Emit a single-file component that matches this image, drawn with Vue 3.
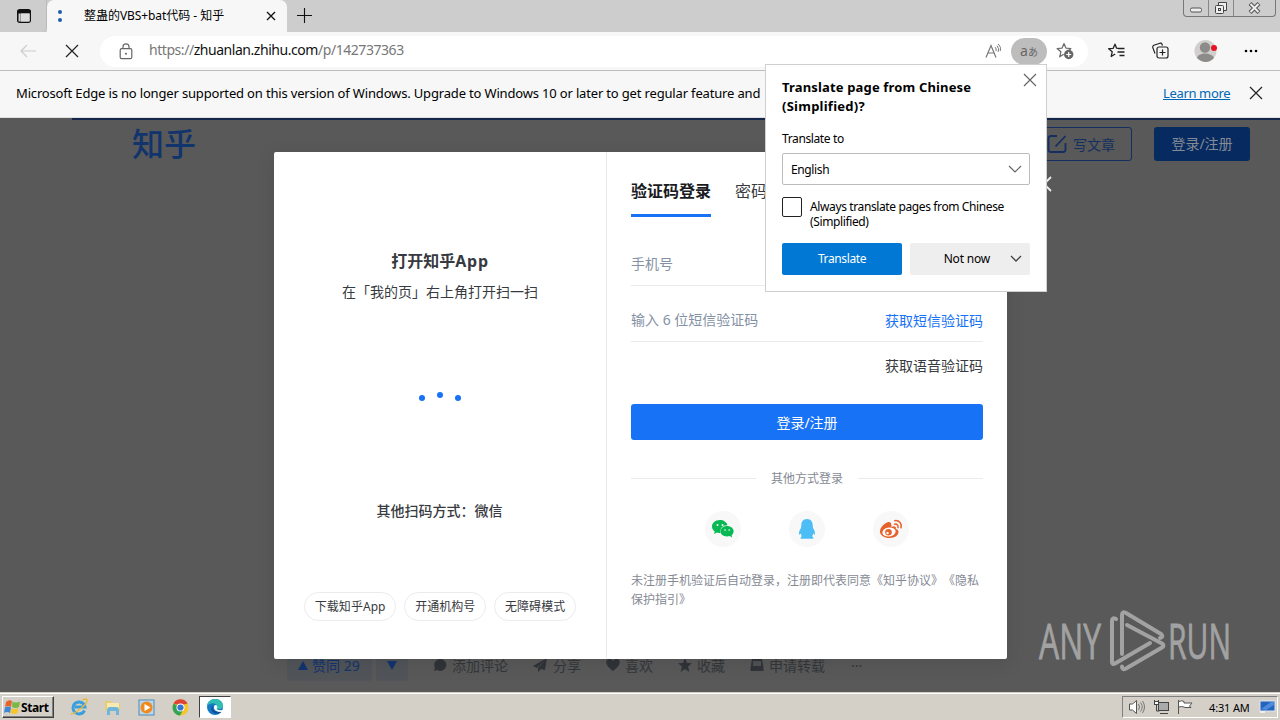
<script setup>
const tasks = ['下载知乎App', '开通机构号', '无障碍模式']
</script>

<template>
  <div class="screen">
    <div class="tabstrip">
      <div class="tabmenu">
        <svg width="16" height="16" viewBox="0 0 16 16"><rect x="1.700" y="1.700" width="12.600" height="12.600" rx="2" fill="none" stroke="#111" stroke-width="1.400" /><path d="M1.500 2h13v3.500h-13z M1.500 5h3v9h-3z" fill="#111" /><rect x="5" y="5.500" width="8.600" height="8" fill="#ddd" /><rect x="2.500" y="5.500" width="2" height="8" fill="#ccc" /></svg>
      </div>
      <div class="tab">
        <span class="load"><i></i><i></i></span>
        <span class="tabtitle">整蛊的<span class="lat">VBS+bat</span>代码 - 知乎</span>
        <svg class="tabx" width="10" height="10" viewBox="0 0 10 10"><path d="M1 1l8 8M9 1l-8 8" stroke="#111" stroke-width="1.300" /></svg>
      </div>
      <svg class="plus" width="16" height="16" viewBox="0 0 16 16"><path d="M7.500 0v15M0 7.500h15" stroke="#111" stroke-width="1.100" /></svg>
      <div class="winbtns">
        <span class="wb w1"><svg width="14" height="6" viewBox="0 0 14 6"><rect x="1.500" y="1" width="11" height="4" rx="1.500" fill="#eee" stroke="#555" /></svg></span>
        <span class="wb w2"><svg width="14" height="14" viewBox="0 0 14 14"><path d="M4.500 4V1.500h8v8H10" fill="#eee" stroke="#444" /><rect x="1.500" y="4.500" width="8" height="8" rx="1" fill="#eee" stroke="#444" /><rect x="4.500" y="7.500" width="2" height="2" fill="none" stroke="#444" /></svg></span>
        <span class="wb w3"><svg width="13" height="12" viewBox="0 0 13 12"><path d="M2 1.500l9 9M11 1.500l-9 9" stroke="#555" stroke-width="4" /><path d="M2.500 2l8 8M10.500 2l-8 8" stroke="#eee" stroke-width="2" /></svg></span>
      </div>
    </div>

    <div class="toolbar">
      <svg class="back" width="17" height="14" viewBox="0 0 17 14"><path d="M7 1L1 7l6 6M1 7h15" fill="none" stroke="#ccc" stroke-width="1.200" /></svg>
      <svg class="stop" width="14" height="14" viewBox="0 0 14 14"><path d="M1 1l12 12M13 1L1 13" stroke="#222" stroke-width="1.200" /></svg>
      <div class="address">
        <svg class="lock" width="14" height="17" viewBox="0 0 14 17"><rect x="1.200" y="5.700" width="11.600" height="10" rx="1.500" fill="none" stroke="#666" stroke-width="1.200" /><path d="M4 5.500V3.800a3 3 0 0 1 6 0v1.700" fill="none" stroke="#666" stroke-width="1.200" /><circle cx="7" cy="10.800" r="1" fill="#666" /></svg>
        <span class="url">https://<b>zhuanlan.zhihu.com</b>/p/142737363</span>
        <svg class="read" width="17" height="16" viewBox="0 0 17 16"><path d="M1 14.500L6 2.500l5 12M2.900 10h6.200" fill="none" stroke="#777" stroke-width="1.200" /><path d="M10.200 4.200q1.600 1.700.8 4M12 2.800q2.500 2.600 1.200 6M13.300 1q3.300 3.300 2 7" fill="none" stroke="#777" /></svg>
        <span class="trans"><i>a</i><em>あ</em></span>
        <svg class="fav" width="18" height="18" viewBox="0 0 18 18"><path d="M8 1.500l1.900 4.600 5 .4-3.700 3.200M8 1.500L6.100 6.100l-5 .4 3.800 3.300-1.200 5 4-2.500" fill="none" stroke="#666" stroke-width="1.200" stroke-linejoin="round" /><circle cx="12.700" cy="12.500" r="4.700" fill="#666" /><path d="M12.700 10v5M10.200 12.500h5" stroke="#fff" stroke-width="1.200" /></svg>
      </div>
      <svg class="a a1" width="18" height="16" viewBox="0 0 18 16"><path d="M10 5.400L8.600 5.200 7 1.200 5.200 5.300l-4.500.4 3.500 3.100-1 4.700L7.200 11M10 5.500h6.500M9.500 9h7M11.500 12.500h5" fill="none" stroke="#222" stroke-width="1.300" stroke-linejoin="round" /></svg>
      <svg class="a a2" width="18" height="18" viewBox="0 0 18 18"><path d="M4 11.500L1.800 5.600Q1.300 4 2.800 3.300L9 1.200q1.500-.4 2 1l.4 1.500" fill="none" stroke="#222" stroke-width="1.200" /><rect x="6" y="5" width="11" height="11" rx="2" fill="#f7f7f7" stroke="#222" stroke-width="1.200" /><path d="M11.500 7.500v6M8.500 10.500h6" stroke="#222" stroke-width="1.200" /></svg>
      <svg class="a a3" width="24" height="24" viewBox="0 0 24 24"><circle cx="11.500" cy="12" r="11" fill="#d1cfcd" /><circle cx="11" cy="8.500" r="5.200" fill="#8d8b89" /><path d="M3 19c1-6 15-6 17 0q-8 8-17 0z" fill="#8d8b89" /><circle cx="20" cy="9" r="3" fill="#e81123" /></svg>
      <svg class="a a4" width="14" height="4" viewBox="0 0 14 4"><circle cx="2" cy="2" r="1.300" /><circle cx="7" cy="2" r="1.300" /><circle cx="12" cy="2" r="1.300" /></svg>
    </div>

    <div class="infobar">
      <span class="infotext">Microsoft Edge is no longer supported on this version of Windows. Upgrade to Windows 10 or later to get regular feature and</span>
      <span class="learn">Learn more</span>
      <svg class="infox" width="14" height="14" viewBox="0 0 14 14"><path d="M1 1l12 12M13 1L1 13" stroke="#222" stroke-width="1.200" /></svg>
    </div>

    <div class="page">
      <div class="progress"></div>
      <div class="head">
        <span class="logo">知乎</span>
        <span class="write"><svg width="20" height="20" viewBox="0 0 20 20"><path d="M10 2H4Q1.500 2 1.500 4.500v11Q1.500 18 4 18h12q2.500 0 2.500-2.500V9M8.500 12.500L18.500 2" fill="none" stroke="#142e60" stroke-width="1.800" /></svg>写文章</span>
        <span class="login">登录/注册</span>
      </div>
      <svg class="closemodal" width="8" height="16" viewBox="0 0 8 16"><path d="M7 1L0 8l7 7" fill="none" stroke="#eee" stroke-width="1.800" /></svg>
      <div class="actions">
        <span class="vote"><svg width="10" height="9"><path d="M5 0l5 9H0z" fill="#12346f" /></svg>赞同 29</span>
        <span class="down"><svg width="10" height="9"><path d="M0 0h10L5 9z" fill="#12346f" /></svg></span>
        <span class="act c1"><svg width="14" height="14"><path d="M7 1a6 6 0 1 1-3 11L1 13l1-3A6 6 0 0 1 7 1z" /></svg>添加评论</span>
        <span class="act c2"><svg width="15" height="14"><path d="M14 0L0 8l4 2zM14 0L5 10v4l3-3 4 1z" /></svg>分享</span>
        <span class="act c3"><svg width="14" height="14"><path d="M7 13C-6 4 3-3 7 3c4-6 13 1 0 10z" /></svg>喜欢</span>
        <span class="act c4"><svg width="14" height="14"><path d="M7 0l2 5 5 .3-4 3.300L11.500 14 7 11l-4.500 3L4 8.600 0 5.300 5 5z" /></svg>收藏</span>
        <span class="act c5"><svg width="14" height="14"><path d="M2 1h10l1.500 9v3H.500v-3z" /><path d="M3 3h8v5H3z" fill="#505255" /></svg>申请转载</span>
        <span class="act c6">···</span>
      </div>

      <svg class="anyrun" width="210" height="64" viewBox="0 0 210 64">
        <g fill="none" stroke="#a2a2a2" stroke-width="4" stroke-linecap="round" stroke-linejoin="round">
          <path d="M77 9q-4-2-4 2v41q0 3 3 1.500l35-20.500" />
          <path d="M83 44V5q0-4 4-2l35 21q3 3-1 4" />
          <path d="M88 15l35 18.500q3 2 0 4L87 58.500q-4 2-4-2" />
        </g>
        <text x="0" y="48.500" class="arword" textLength="62" lengthAdjust="spacingAndGlyphs">ANY</text>
        <text x="129" y="48.500" class="arword" textLength="63" lengthAdjust="spacingAndGlyphs">RUN</text>
      </svg>

      <div class="modal">
        <div class="left">
          <div class="ltitle">打开知乎<span>App</span></div>
          <div class="lsub">在「我的页」右上角打开扫一扫</div>
          <div class="dots"><i></i><i class="up"></i><i></i></div>
          <div class="lother">其他扫码方式：微信</div>
          <div class="pills"><span v-for="t in tasks" :key="t">{{ t }}</span></div>
        </div>
        <div class="right">
          <div class="tabs"><span class="on">验证码登录</span><span>密码登录</span></div>
          <div class="field f1">手机号</div>
          <div class="field f2"><span>输入 6 位短信验证码</span><b>获取短信验证码</b></div>
          <div class="voice">获取语音验证码</div>
          <div class="submit">登录/注册</div>
          <div class="sep"><i></i><span>其他方式登录</span><i></i></div>
          <div class="social">
            <span><svg width="24" height="20" viewBox="0 0 24 20"><path d="M9 1C4 1 1 4 1 7.500c0 2 1 3.800 2.800 5L3 15l3-1.500q1.500.500 3.500.500C8.500 9 12 6 16.500 6.200 15.700 3 12.500 1 9 1z" fill="#07b853" /><path d="M16 7c-4 0-6.500 2.500-6.500 5.300S12 17.500 16 17.500q1.500 0 2.600-.4l2.600 1.300-.6-2c1.200-1 2-2.400 2-4.100C22.600 9.500 20 7 16 7z" fill="#07b853" /><g fill="#fff"><circle cx="6.500" cy="6" r="1" /><circle cx="11.500" cy="6" r="1" /><circle cx="14" cy="11" r=".8" /><circle cx="18.200" cy="11" r=".8" /></g></svg></span>
            <span><svg width="18" height="22" viewBox="0 0 18 22"><path d="M9 1C5 1 3.300 4 3.300 7L3 10c-1 1.300-2.300 4-2 6 .2 1.200 1 .7 1.800-.8.200 1.500.6 2.300 1.200 3-1.500.7-1.700 1.800-.9 2.500h11.800c.8-.7.6-1.800-.9-2.500.6-.7 1-1.500 1.200-3 .8 1.500 1.600 2 1.800.8.300-2-1-4.700-2-6l-.3-3C14.700 4 13 1 9 1z" fill="#4dbdf5" /></svg></span>
            <span><svg width="24" height="20" viewBox="0 0 24 20"><path d="M9.500 3C5 4 1 8.800 1 12.500 1 16.500 5.500 19 10.500 19c5.500 0 9-3 9-6 0-1.800-1.200-2.700-2.700-3 .7-2.500-1-3.500-4.500-2.200C13 4.500 11.500 2.700 9.500 3z" fill="#e6622b" /><ellipse cx="10" cy="13" rx="6.700" ry="4.500" fill="#fff" transform="rotate(-8 10 13)" /><circle cx="9.500" cy="13.300" r="3.300" fill="#e6622b" /><circle cx="8.500" cy="14" r="1.200" fill="#fff" /><path d="M15.500 5.200q4-.7 3.500 3.500M15.800 1.700c4.500-.6 7.300 2.800 6.200 7" fill="none" stroke="#e6622b" stroke-width="1.500" stroke-linecap="round" /></svg></span>
          </div>
          <div class="terms">未注册手机验证后自动登录，注册即代表同意《知乎协议》《隐私保护指引》</div>
        </div>
      </div>
    </div>

    <div class="taskbar">
      <div class="start"><svg width="17" height="16" viewBox="0 0 17 16"><path d="M2 3q3-3 6-1L7 8Q4 6 1 8z" fill="#e8622c" /><path d="M8.500 2.500q3 2 7.500 0L15 8q-3 2-7 0z" fill="#78b843" /><path d="M1 8.500q3-2 6 0L6 14q-3-2-6 0z" fill="#3f87d6" /><path d="M7.500 9q3 2 7 0l-1 5q-3 2-7 0z" fill="#f6c62d" /></svg><span>Start</span></div>
      <svg class="q q1" width="18" height="18" viewBox="0 0 18 18"><path d="M14.500 12.500A6 6 0 1 1 15 9H5" fill="none" stroke="#3b9fdc" stroke-width="3" /><path d="M2 15C-2 20 18 7 17 2q-.5-2-5 0" fill="none" stroke="#e8b93c" stroke-width="1.300" /></svg>
      <svg class="q q2" width="18" height="17" viewBox="0 0 18 17"><path d="M1 2h6l1 2h8v8H1z" fill="#e9cd72" /><path d="M3 4h12v8H3z" fill="#f8eab3" /><path d="M3 16v-5q0-3 3-3h6q3 0 3 3v5h-3v-4H6v4z" fill="#70b5dc" /></svg>
      <svg class="q q3" width="17" height="17" viewBox="0 0 17 17"><rect x="1" y="1" width="15" height="15" fill="#b8d8ed" stroke="#5289b5" /><circle cx="8.500" cy="8.500" r="6" fill="#f08a1d" /><path d="M6.500 5l6 3.500-6 3.500z" fill="#fff" /></svg>
      <svg class="q q4" width="17" height="17" viewBox="0 0 17 17"><circle cx="8.500" cy="8.500" r="8" fill="#f5c52c" /><path d="M1.600 4.500A8 8 0 0 0 8 16.500l3.500-6-3-2z" fill="#32a455" /><path d="M1.500 4.500a8 8 0 0 1 14 0l-7 2z" fill="#dc4437" /><circle cx="8.500" cy="8.500" r="4" fill="#fff" /><circle cx="8.500" cy="8.500" r="3.100" fill="#3974d5" /></svg>
      <div class="active"><svg width="18" height="18" viewBox="0 0 18 18"><circle cx="9" cy="9" r="8" fill="#1579c5" /><path d="M1 8C2-1 16-1 17 7c.3 4-4 5-6.500 3.500C13 5 5 3 1 8z" fill="#32bdb3" /><path d="M7 8q-2 6 8 6c-2 2-5 2-7 1C4 13 5 8 7 8z" fill="#124f97" /><path d="M8 8q2-2 3 0t-.5 3q2 2 6.500 1l-1 2Q7 14 8 8z" fill="#fff" /></svg></div>
      <div class="tray">
        <svg width="18" height="16" viewBox="0 0 18 16"><path d="M1.500 5h3l4-3.500v13L4.500 11h-3z" fill="#fff" stroke="#555" /><path d="M10.500 5q2 3 0 6M12.500 3.500q3.500 4.500 0 9M14.500 2q4 6 0 12" fill="none" stroke="#777" /></svg>
        <svg width="17" height="16" viewBox="0 0 17 16"><rect x="5.500" y="3.500" width="10" height="8" fill="#aaa" stroke="#444" /><path d="M7 14.500h8M1.500 1v4h4V1M3.500 5v7h3" fill="none" stroke="#444" /><rect x="1.500" y="2.500" width="4" height="3" fill="#fff" stroke="#444" /></svg>
        <svg width="17" height="16" viewBox="0 0 17 16"><path d="M1.500 15V1M2 2.500q3-1.500 5 0V4h8l-2.500 3L14 8.500H8L7 8q-2-1-5 0" fill="#fff" stroke="#555" /></svg>
        <span class="clock">4:31 AM</span>
        <svg class="desk" width="17" height="14" viewBox="0 0 17 14"><rect x="1" y="1" width="15" height="10" fill="#2763bd" stroke="#dce6f1" /><path d="M2 9L12 2h3v3L7 10z" fill="#4e8bdc" /><path d="M1 12h5" stroke="#eee" stroke-width="2" /></svg>
      </div>
    </div>

    <div class="popup">
      <svg class="popx" width="14" height="14" viewBox="0 0 14 14"><path d="M1 1l12 12M13 1L1 13" stroke="#666" stroke-width="1.200" /></svg>
      <div class="ptitle"><span class="l1">Translate page from Chinese</span><br />(Simplified)?</div>
      <div class="plabel">Translate to</div>
      <div class="select"><span>English</span><svg width="14" height="8" viewBox="0 0 14 8"><path d="M1 1l6 6 6-6" fill="none" stroke="#666" stroke-width="1.200" /></svg></div>
      <div class="check"><i></i><span>Always translate pages from Chinese<br />(Simplified)</span></div>
      <div class="pbtns"><span class="pri">Translate</span><span class="sec"><span>Not now</span><svg width="12" height="8" viewBox="0 0 12 8"><path d="M1 1l5 5 5-5" fill="none" stroke="#444" stroke-width="1.300" /></svg></span></div>
    </div>
  </div>
</template>

<style>
body { overflow: hidden; }
</style>

<style scoped>
* { box-sizing: border-box; }
i, em { font-style: normal; }
svg { display: block; flex: none; }
.screen { position: relative; width: 1280px; height: 720px; display: flex; flex-direction: column; overflow: hidden; white-space: nowrap; color: #111; font-family: "Noto Sans", "Noto Sans CJK SC", sans-serif; text-spacing-trim: space-all; }
.tabstrip { height: 32px; background: #cdcdcd; display: flex; align-items: flex-start; }
.tabmenu { width: 47px; height: 32px; padding: 8px 0 0 16px; border-right: 1px solid #bbb; border-bottom-right-radius: 5px; }
.tab { width: 240px; height: 32px; background: #f7f7f7; border-radius: 7px 7px 0 0; display: flex; align-items: center; padding-left: 11px; }
.load { display: flex; flex-direction: column; gap: 4px; width: 26px; }
.load i { width: 4px; height: 4px; border-radius: 2px; background: #1f5fa8; }
.tabtitle { width: 182px; font-size: 12px; line-height: 18px; color: #000; }
.lat { letter-spacing: -0.1px; }
.plus { margin: 8px 0 0 10px; }
.winbtns { margin-left: auto; margin-right: 4px; width: 93px; height: 17px; border: 1px solid #777; border-top: 0; border-radius: 0 0 4px 4px; display: flex; }
.wb { display: flex; justify-content: center; align-items: center; }
.w1 { width: 25px; border-right: 1px solid #888; padding-top: 3px; }
.w2 { width: 25px; border-right: 1px solid #888; }
.w3 { flex: 1; }
.toolbar { height: 39px; background: #f7f7f7; border-bottom: 1px solid #bdbdbd; display: flex; align-items: center; padding-left: 20px; }
.stop { margin-left: 28px; }
.address { width: 988px; height: 31px; margin-left: 21px; background: #fff; border-radius: 16px; display: flex; align-items: center; padding-left: 19px; }
.url { margin-left: 16px; width: 836px; font-size: 14px; line-height: 20px; margin-top: -2px; letter-spacing: -.45px; color: #777; }
.url b { font-weight: 400; color: #111; }
.trans { margin-left: 9px; width: 36px; height: 27px; border-radius: 14px; background: #bdbdbd; color: #666; display: flex; align-items: center; justify-content: center; }
.trans i { font-size: 14px; line-height: 20px; }
.trans em { font-size: 10px; }
.fav { margin-left: 9px; }
.a1 { margin-left: 20px; }
.a2 { margin-left: 25px; }
.a3 { margin-left: 25px; }
.a4 { margin-left: 26px; }
.infobar { height: 47px; background: #f7f7f7; display: flex; align-items: center; padding: 0 17px 2px 16px; font-size: 13px; border-bottom: 1px solid #dedede; color: #000; }
.infotext { width: 1147px; letter-spacing: -.165px; }
.learn { width: 86px; color: #0067b8; text-decoration: underline; letter-spacing: -.35px; }
.page { position: relative; height: 574px; background: #595959; }
.progress { height: 2px; margin-left: 72px; background: #14264b; }
.head { height: 48px; padding-left: 132px; display: flex; align-items: center; }
.logo { width: 912px; color: #12346d; font: 500 32px/44px "Noto Sans CJK SC", sans-serif; margin-top: -5px; }
.write { width: 88px; height: 34px; border: 1px solid #142e60; border-radius: 3px; display: flex; align-items: center; gap: 6px; padding-left: 2px; color: #142e60; font-size: 14px; }
.login { margin-left: 22px; width: 96px; height: 34px; border-radius: 3px; background: #072a60; color: #858b95; font-size: 14px; text-align: center; line-height: 34px; }
.closemodal { position: absolute; left: 1044px; top: 58px; }
.actions { position: absolute; left: 287px; top: 531px; height: 32px; display: flex; align-items: center; font-size: 14px; color: #34373a; }
.vote { width: 85px; height: 32px; display: flex; align-items: center; gap: 4px; padding-left: 11px; background: #515458; color: #12346f; border-radius: 3px; }
.down { width: 32px; height: 32px; margin-left: 4px; display: flex; align-items: center; justify-content: center; background: #515458; border-radius: 3px; }
.act { display: flex; align-items: center; gap: 5px; fill: #303338; }
.c1 { margin-left: 25px; }
.c2 { margin-left: 25px; }
.c3 { margin-left: 25px; }
.c4 { margin-left: 25px; }
.c5 { margin-left: 25px; }
.c6 { margin-left: 26px; }
.anyrun { position: absolute; left: 1039px; top: 492px; overflow: visible; }
.arword { font: 49px "Open Sans", sans-serif; fill: #a2a2a2; stroke: #a2a2a2; stroke-width: .8px; }
.modal { position: absolute; left: 274px; top: 34px; width: 733px; height: 507px; background: #fff; border-radius: 2px; display: flex; color: #373a40; box-shadow: 0 4px 20px rgba(0,0,0,.1); }
.left { width: 333px; border-right: 1px solid #ebebeb; text-align: center; padding-top: 97px; }
.ltitle { font-size: 16px; font-weight: 700; line-height: 24px; }
.ltitle span { letter-spacing: .8px; }
.lsub { font-size: 14px; line-height: 20px; margin-top: 9px; }
.dots { margin: 90px 0 0 145px; display: flex; gap: 12px; }
.dots i { width: 6px; height: 6px; border-radius: 3px; background: #1772f6; margin-top: 3px; }
.dots .up { margin-top: 0; }
.lother { margin-top: 100px; font-size: 14px; line-height: 20px; font-weight: 500; margin-left: -1px; }
.pills { display: flex; justify-content: center; gap: 8px; margin-top: 71px; }
.pills span { height: 29px; border: 1px solid #ebebeb; border-radius: 15px; padding: 0 9.800px; font-size: 12px; line-height: 27px; letter-spacing: .05px; }
.right { width: 400px; padding: 19px 24px 0; }
.tabs { display: flex; gap: 24px; height: 46px; font-size: 16px; line-height: 40px; }
.tabs .on { font-weight: 700; color: #191b1f; border-bottom: 3px solid #1772f6; }
.field { font-size: 14px; color: #8491a5; border-bottom: 1px solid #ebebeb; }
.f1 { margin-top: 25px; height: 44px; line-height: 44px; }
.f2 { height: 56px; display: flex; justify-content: space-between; line-height: 69px; }
.f2 span { line-height: 67px; }
.f2 b { font-weight: 400; color: #1772f6; }
.voice { text-align: right; font-size: 14px; line-height: 20px; margin-top: 14px; }
.submit { margin-top: 28px; height: 36px; background: #1772f6; color: #fff; border-radius: 3px; font-size: 14px; line-height: 37px; text-align: center; }
.sep { display: flex; align-items: center; justify-content: space-between; margin-top: 28px; height: 20px; font-size: 12px; color: #858a94; }
.sep i { width: 125px; height: 1px; background: #ebebeb; }
.social { display: flex; gap: 48px; padding-left: 74px; margin-top: 23px; }
.social span { width: 36px; height: 36px; border-radius: 18px; background: #f8f8f8; display: flex; align-items: center; justify-content: center; }
.terms { margin-top: 24px; font-size: 12px; line-height: 19px; white-space: normal; color: #858a94; word-break: break-all; }
.taskbar { height: 28px; border-top: 1px solid #d4d0c8; background: #d4d0c8; box-shadow: inset 0 1px #fff; display: flex; align-items: center; padding-left: 2px; }
.start { width: 52px; height: 22px; margin-top: 1px; border: 1px solid #fff; border-right: 1px solid #404040; border-bottom: 1px solid #404040; display: flex; align-items: center; box-shadow: inset -1px -1px #808080; padding-left: 1px; }
.start span { font: 700 12px "Noto Sans", sans-serif; color: #000; letter-spacing: -.4px; }
.q { margin-top: 1px; }
.q1 { margin-left: 16px; }
.q2 { margin-left: 16px; }
.q3 { margin-left: 16px; }
.q4 { margin-left: 17px; }
.active { width: 32px; height: 22px; margin: 1px 0 0 10px; background: #fff; border: 1px solid #fff; border-top: 1px solid #404040; border-left: 1px solid #404040; display: flex; justify-content: center; align-items: center; }
.tray { margin-left: auto; margin-right: 2px; margin-top: 1px; width: 156px; height: 22px; border: 1px solid #fff; border-top-color: #808080; border-left-color: #808080; display: flex; align-items: center; gap: 7px; padding-left: 5px; }
.clock { font-size: 11px; margin-left: 8px; width: 43px; letter-spacing: -.15px; color: #000; }
.popup { position: absolute; left: 765px; top: 64px; width: 282px; height: 228px; border: 1px solid #cfcfcf; background: #fff; padding: 13px 16px 0; color: #000; font-size: 12px; letter-spacing: -.38px; }
.popx { position: absolute; left: 257px; top: 8px; }
.ptitle { font-size: 13px; line-height: 19px; font-weight: 700; letter-spacing: .25px; }
.l1 { letter-spacing: .16px; }
.plabel { line-height: 18px; margin-top: 14px; font-size: 12px; }
.select { height: 32px; margin-top: 5px; border: 1px solid #bcbcbc; border-radius: 2px; display: flex; justify-content: space-between; align-items: center; padding: 0 7px 0 8px; }
.check { display: flex; gap: 8px; margin-top: 12px; line-height: 15px; }
.check i { width: 20px; height: 20px; border: 1px solid #222; border-radius: 2px; }
.check span { padding-top: 2px; }
.pbtns { display: flex; gap: 8px; margin-top: 14px; }
.pri, .sec { width: 120px; height: 32px; border-radius: 2px; line-height: 32px; text-align: center; }
.pri { background: #0078d4; color: #fff; }
.sec { background: #eee; display: flex; align-items: center; justify-content: flex-end; gap: 20px; padding-right: 8px; letter-spacing: -.2px; }
</style>
